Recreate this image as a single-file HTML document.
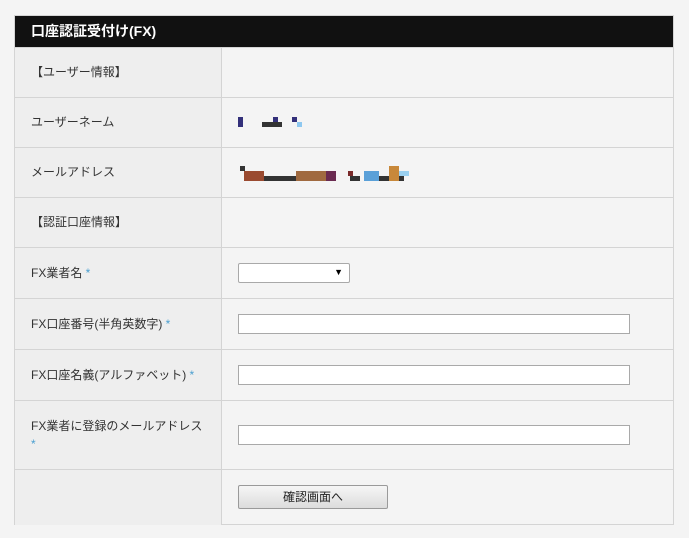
<!DOCTYPE html>
<html><head><meta charset="utf-8"><style>
body{margin:0;width:689px;height:538px;background:#f4f4f4;font-family:"Liberation Sans","Noto Sans CJK JP",sans-serif;position:relative;overflow:hidden}
.t{position:absolute;left:14px;top:15px;width:658px;height:508px;border:1px solid #d4d4d4;background:#f4f4f4}
.h{position:absolute;left:0;top:0;width:658px;height:31px;background:#111;color:#fff;font-weight:bold;font-size:14px;line-height:31px;padding-left:16px;box-sizing:border-box}
.r{position:absolute;left:0;width:658px;border-top:1px solid #d4d4d4}
.l{position:absolute;left:0;top:0;bottom:0;width:207px;background:#eee;border-right:1px solid #d4d4d4;font-size:12px;color:#333;padding-left:16px;box-sizing:border-box}
.s{color:#4a9fd0}
.i{position:absolute;left:223px;width:390px;height:18px;border:1px solid #a9a9a9;background:#fff}
.p{position:absolute;height:4px}
</style></head><body>
<div class="t">
<div class="h">口座認証受付け(FX)</div>
<div class="r" style="top:31px;height:49px"><div class="l" style="line-height:49px">【ユーザー情報】</div></div>
<div class="r" style="top:81px;height:49px"><div class="l" style="line-height:49px">ユーザーネーム</div>
<div class="p" style="left:223px;top:19px;width:5px;height:10px;background:#33307a"></div>
<div class="p" style="left:247px;top:24px;width:20px;height:5px;background:#333"></div>
<div class="p" style="left:258px;top:19px;width:5px;height:5px;background:#33307a"></div>
<div class="p" style="left:277px;top:19px;width:5px;height:5px;background:#33307a"></div>
<div class="p" style="left:282px;top:24px;width:5px;height:5px;background:#8ec8f0"></div>
</div>
<div class="r" style="top:131px;height:49px"><div class="l" style="line-height:49px">メールアドレス</div>
<div class="p" style="left:225px;top:18px;width:5px;height:5px;background:#333"></div>
<div class="p" style="left:229px;top:23px;width:20px;height:10px;background:#9a4a30"></div>
<div class="p" style="left:249px;top:28px;width:40px;height:5px;background:#333"></div>
<div class="p" style="left:281px;top:23px;width:30px;height:10px;background:#a06a40"></div>
<div class="p" style="left:311px;top:23px;width:10px;height:10px;background:#6a2a50"></div>
<div class="p" style="left:333px;top:23px;width:5px;height:5px;background:#7a2a2a"></div>
<div class="p" style="left:335px;top:28px;width:10px;height:5px;background:#333"></div>
<div class="p" style="left:349px;top:23px;width:15px;height:10px;background:#5aa0d8"></div>
<div class="p" style="left:364px;top:28px;width:25px;height:5px;background:#333"></div>
<div class="p" style="left:374px;top:18px;width:10px;height:15px;background:#c8883a"></div>
<div class="p" style="left:384px;top:23px;width:10px;height:5px;background:#9ad0f0"></div>
</div>
<div class="r" style="top:181px;height:49px"><div class="l" style="line-height:49px">【認証口座情報】</div></div>
<div class="r" style="top:231px;height:50px"><div class="l" style="line-height:50px">FX業者名 <span class="s">*</span></div>
<div class="i" style="top:15px;width:110px;border-radius:2px"><span style="position:absolute;right:6px;top:3px;font-size:9px">▼</span></div></div>
<div class="r" style="top:282px;height:50px"><div class="l" style="line-height:50px">FX口座番号(半角英数字) <span class="s">*</span></div><div class="i" style="top:15px"></div></div>
<div class="r" style="top:333px;height:50px"><div class="l" style="line-height:50px">FX口座名義(アルファベット) <span class="s">*</span></div><div class="i" style="top:15px"></div></div>
<div class="r" style="top:384px;height:68px"><div class="l" style="padding-top:16px;line-height:18px">FX業者に登録のメールアドレス<br><span class="s">*</span></div><div class="i" style="top:24px"></div></div>
<div class="r" style="top:453px;height:55px"><div class="l"></div>
<div style="position:absolute;left:223px;top:15px;width:148px;height:22px;border:1px solid #9a9a9a;border-radius:2px;background:linear-gradient(#f6f6f6,#dcdcdc);font-size:12px;text-align:center;line-height:22px;color:#222">確認画面へ</div></div>
</div>
</body></html>
